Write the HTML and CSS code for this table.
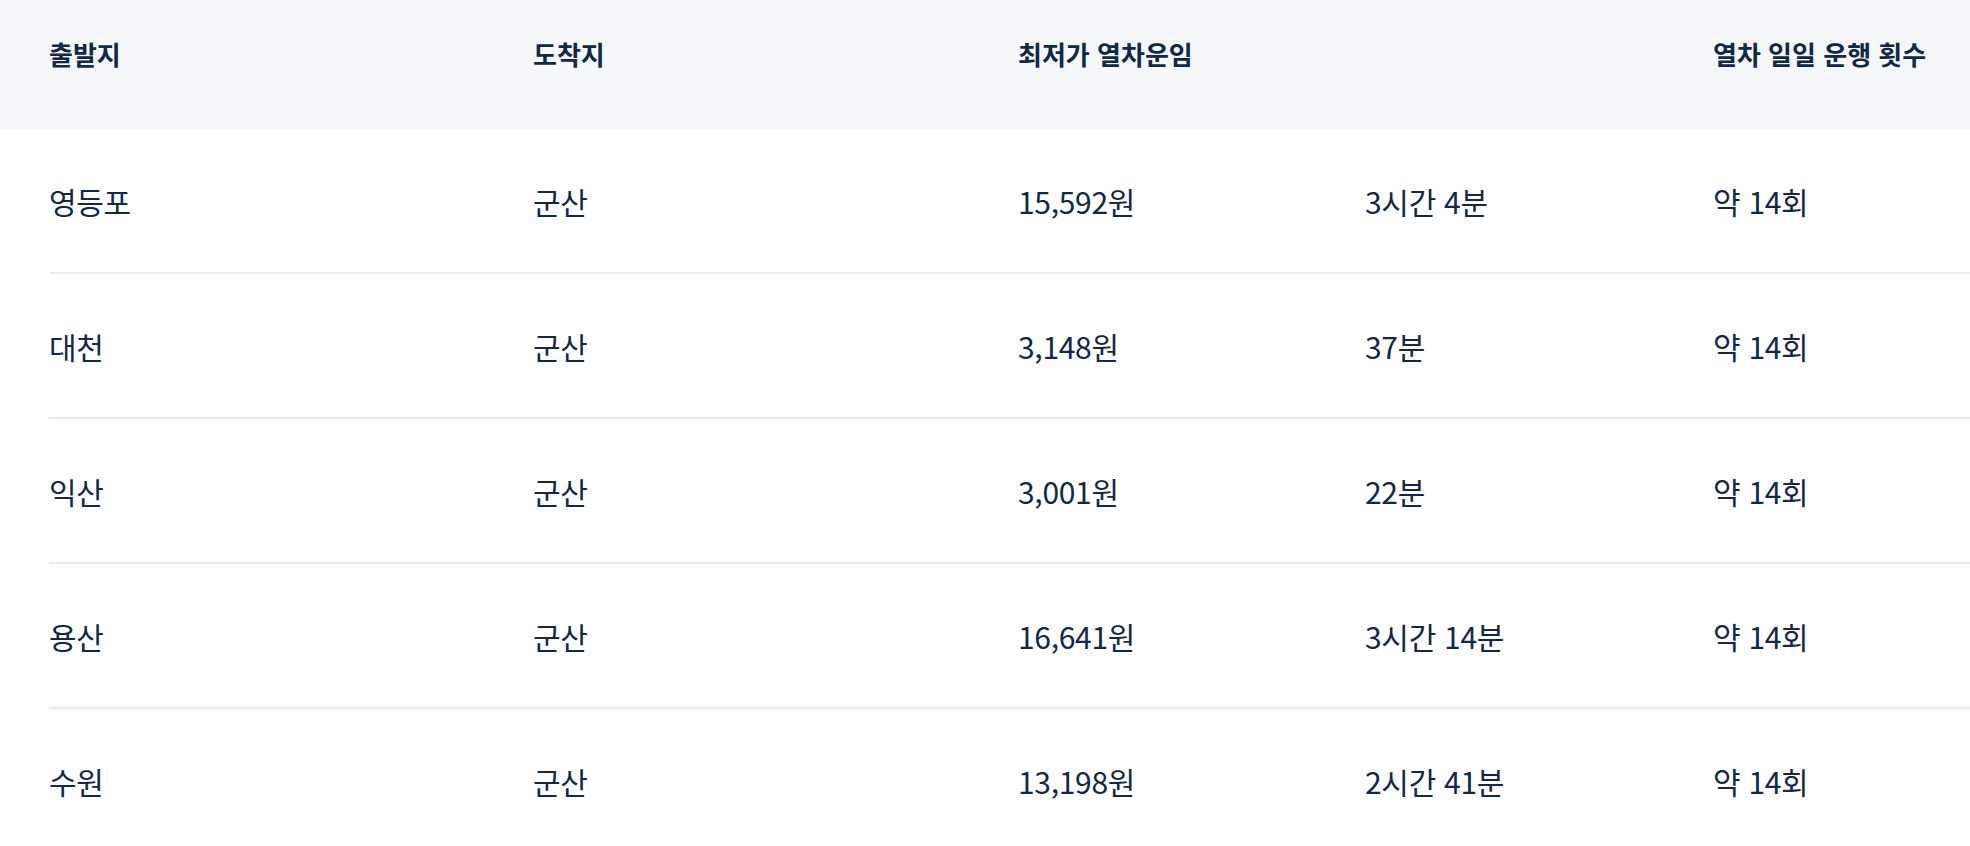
FILE: index.html
```html
<!DOCTYPE html>
<html lang="ko">
<head>
<meta charset="utf-8">
<title>군산행 열차</title>
<link rel="stylesheet" href="styles.css">
</head>
<body>
<div class="table">
  <div class="thead">
    <div class="row head-row">
      <div class="cell">출발지</div>
      <div class="cell">도착지</div>
      <div class="cell">최저가 열차운임</div>
      <div class="cell"></div>
      <div class="cell">열차 일일 운행 횟수</div>
    </div>
  </div>
  <div class="tbody">
    <div class="row body-row">
      <div class="cell">영등포</div>
      <div class="cell">군산</div>
      <div class="cell">15,592원</div>
      <div class="cell">3시간 4분</div>
      <div class="cell">약 14회</div>
    </div>
    <div class="row body-row">
      <div class="cell">대천</div>
      <div class="cell">군산</div>
      <div class="cell">3,148원</div>
      <div class="cell">37분</div>
      <div class="cell">약 14회</div>
    </div>
    <div class="row body-row">
      <div class="cell">익산</div>
      <div class="cell">군산</div>
      <div class="cell">3,001원</div>
      <div class="cell">22분</div>
      <div class="cell">약 14회</div>
    </div>
    <div class="row body-row">
      <div class="cell">용산</div>
      <div class="cell">군산</div>
      <div class="cell">16,641원</div>
      <div class="cell">3시간 14분</div>
      <div class="cell">약 14회</div>
    </div>
    <div class="row body-row">
      <div class="cell">수원</div>
      <div class="cell">군산</div>
      <div class="cell">13,198원</div>
      <div class="cell">2시간 41분</div>
      <div class="cell">약 14회</div>
    </div>
  </div>
</div>
</body>
</html>
```
FILE: styles.css
```css
html, body {
  margin: 0;
  padding: 0;
  background: #ffffff;
}

body {
  font-family: "Noto Sans CJK KR", "Noto Sans", sans-serif;
  color: #112848;
  overflow: hidden;
}

.table {
  width: 100%;
}

.row {
  display: grid;
  grid-template-columns: 484px 485px 347px 348px 1fr;
}

.thead {
  background: #f5f7fa;
  height: 129px;
  padding-left: 49px;
  box-sizing: border-box;
}

.head-row {
  padding-top: 35px;
  font-size: 26px;
  line-height: 38px;
  font-weight: 700;
}

.head-row .cell {
  white-space: nowrap;
}

.tbody {
  padding-left: 49px;
}

.body-row {
  height: 143px;
  align-items: center;
  border-bottom: 2px solid #e9ecf1;
  font-size: 30px;
  line-height: 42px;
  font-weight: 400;
  letter-spacing: -0.3px;
}

.body-row .cell {
  white-space: nowrap;
}
```
